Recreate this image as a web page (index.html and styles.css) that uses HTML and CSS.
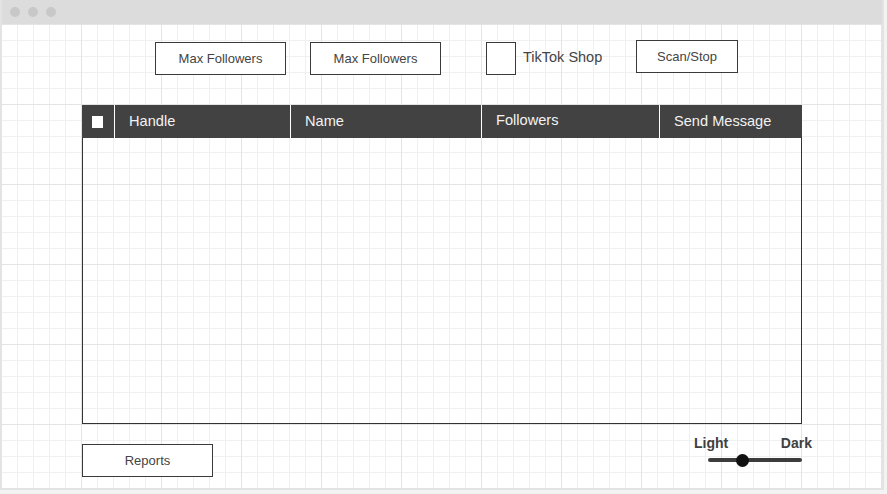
FILE: index.html
```html
<!DOCTYPE html>
<html lang="en">
<head>
<meta charset="utf-8">
<title>TikTok Scanner</title>
<link rel="stylesheet" href="styles.css">
</head>
<body>
<div class="window">
  <div class="titlebar">
    <span class="dot"></span><span class="dot"></span><span class="dot"></span>
  </div>
  <div class="canvas">
    <div class="toolbar">
      <div class="btn btn-low">Max Followers</div>
      <div class="btn btn-low btn-second">Max Followers</div>
      <div class="check"></div>
      <div class="check-label">TikTok Shop</div>
      <div class="btn btn-scan">Scan/Stop</div>
    </div>
    <div class="table">
      <div class="thead">
        <div class="th th-check"><span class="mini-check"></span></div>
        <div class="th">Handle</div>
        <div class="th">Name</div>
        <div class="th th-raised">Followers</div>
        <div class="th">Send Message</div>
      </div>
      <div class="tbody"></div>
    </div>
    <div class="footer">
      <div class="btn btn-reports">Reports</div>
      <div class="theme">
        <div class="theme-labels"><span>Light</span><span>Dark</span></div>
        <div class="slider"><span class="thumb"></span></div>
      </div>
    </div>
  </div>
</div>
</body>
</html>
```
FILE: styles.css
```css
body {
  margin: 0;
  background: #f3f3f3;
  font-family: "Liberation Sans", Arial, sans-serif;
}

.window {
  width: 884px;
  height: 490px;
  box-sizing: border-box;
  border-left: 2px solid #e3e3e3;
  border-right: 2px solid #e3e3e3;
  border-bottom: 2px solid #e3e3e3;
  display: flex;
  flex-direction: column;
}

.titlebar {
  height: 24px;
  flex: 0 0 24px;
  background: #dcdcdc;
  display: flex;
  align-items: center;
  gap: 8px;
  padding-left: 8px;
}

.dot {
  width: 10px;
  height: 10px;
  border-radius: 50%;
  background: #c8c8c8;
}

.canvas {
  flex: 1;
  background-color: #fff;
  background-image:
    linear-gradient(to right, #e4e4e4 1px, transparent 1px),
    linear-gradient(to bottom, #e4e4e4 1px, transparent 1px),
    linear-gradient(to right, #f0f0f0 1px, transparent 1px),
    linear-gradient(to bottom, #f0f0f0 1px, transparent 1px);
  background-size: 80px 80px, 80px 80px, 16px 16px, 16px 16px;
  background-position: 79px 0, 0 0, 15px 0, 0 0;
}

.toolbar {
  height: 81px;
  box-sizing: border-box;
  padding: 16px 0 0 153px;
  display: flex;
  align-items: flex-start;
}

.btn {
  box-sizing: border-box;
  width: 131px;
  height: 33px;
  border: 1px solid #3a3a3a;
  background: #fff;
  color: #444;
  font-size: 13px;
  display: flex;
  align-items: center;
  justify-content: center;
}

.btn-low {
  margin-top: 2px;
}

.btn-second {
  margin-left: 24px;
}

.check {
  box-sizing: border-box;
  margin: 2px 0 0 45px;
  width: 30px;
  height: 33px;
  border: 1px solid #3a3a3a;
  background: #fff;
}

.check-label {
  margin-left: 7px;
  width: 113px;
  height: 33px;
  display: flex;
  align-items: center;
  font-size: 14.5px;
  color: #444;
}

.btn-scan {
  width: 102px;
}

.table {
  margin-left: 80px;
  width: 720px;
}

.thead {
  display: grid;
  grid-template-columns: 32px 176px 191px 178px 143px;
  height: 33px;
  background: #424242;
  color: #f2f2f2;
  font-size: 14.6px;
}

.th {
  display: flex;
  align-items: center;
  padding: 0 0 1px 14px;
  border-left: 1px solid #fff;
}

.th-check {
  border-left: none;
  padding: 0 0 0 10px;
}

.th-raised {
  padding-bottom: 3px;
}

.mini-check {
  width: 11px;
  height: 12px;
  background: #fff;
}

.tbody {
  height: 286px;
  box-sizing: border-box;
  border: 1px solid #333;
  border-top: none;
}

.footer {
  margin-left: 80px;
  width: 730px;
  display: flex;
  align-items: flex-start;
}

.btn-reports {
  margin-top: 20px;
}

.theme {
  margin-left: auto;
  margin-top: 11px;
  width: 118px;
}

.theme-labels {
  display: flex;
  justify-content: space-between;
  font-size: 14px;
  line-height: 16px;
  font-weight: bold;
  color: #404040;
}

.slider {
  position: relative;
  margin: 7px 0 0 14px;
  width: 94px;
  height: 4px;
  border-radius: 2px;
  background: #3c3c3c;
}

.thumb {
  position: absolute;
  left: 28px;
  top: -4.5px;
  width: 13px;
  height: 13px;
  border-radius: 50%;
  background: #111;
}
```
